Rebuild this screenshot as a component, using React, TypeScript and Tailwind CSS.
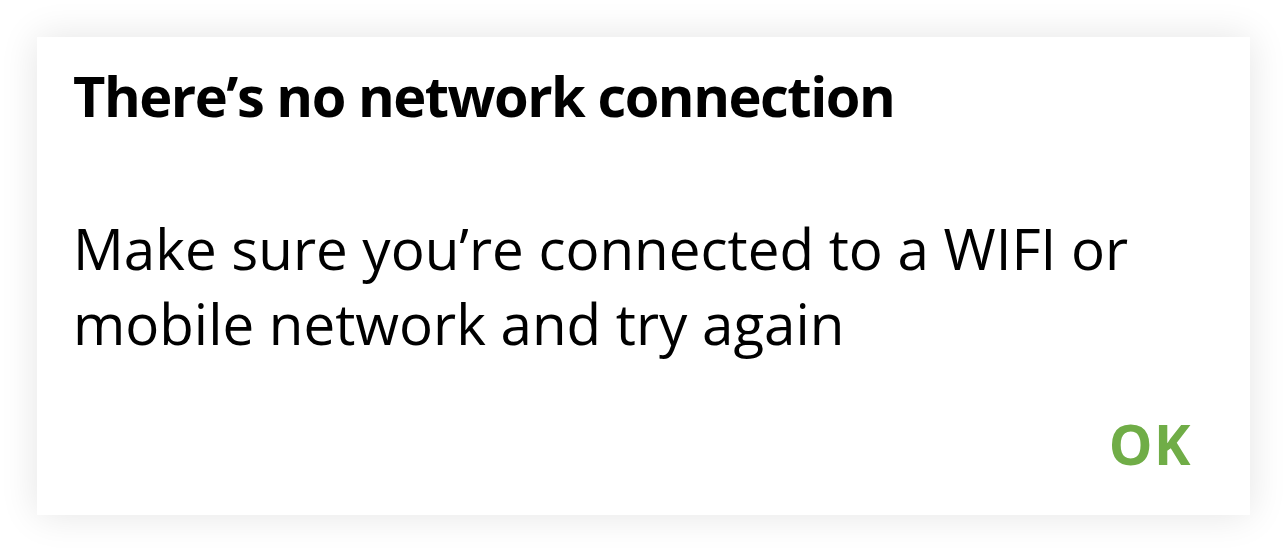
import React from "react";

const font = { fontFamily: '"Open Sans", "Noto Sans", sans-serif' };

export default function App() {
  return (
    <div className="w-[1287px] h-[552px] bg-white p-[37px]" style={font}>
      <div className="w-[1213px] h-[478px] bg-white shadow-[0_0_36px_rgba(0,0,0,0.11)] flex flex-col pl-[36px] pr-[58px] pt-[23px]">
        <h1 className="text-[56px] font-bold leading-[70px] tracking-[-1.5px] text-black">
          There’s no network connection
        </h1>
        <p className="mt-[81px] text-[56.5px] leading-[75px] text-black">
          Make sure you’re connected to a WIFI or
          <br />
          mobile network and try again
        </p>
        <div className="mt-auto mb-[44px] flex justify-end">
          <button className="text-[55px] font-bold leading-none tracking-[1.5px] text-[#70ad47]">
            OK
          </button>
        </div>
      </div>
    </div>
  );
}
